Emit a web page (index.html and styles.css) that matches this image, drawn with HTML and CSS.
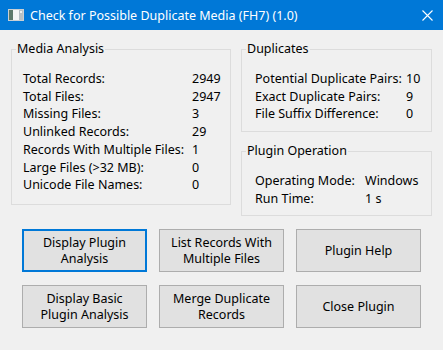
FILE: index.html
```html
<!DOCTYPE html>
<html lang="en">
  <head>
    <meta charset="UTF-8" />
    <title>Check for Possible Duplicate Media (FH7) (1.0)</title>
    <link rel="stylesheet" href="styles.css">
  </head>
  <body>
    <div class="window">
      <div class="titlebar">
        <svg class="app-icon" width="16" height="12" viewBox="0 0 16 12">
          <rect x="0" y="0" width="16" height="12" fill="#c9cfd3" />
          <rect x="1" y="1" width="4" height="10" fill="#5d7a6a" />
          <rect x="5" y="1" width="6" height="10" fill="#f4f6f4" />
          <rect x="11" y="1" width="4" height="10" fill="#b7c0c4" />
          <rect x="12" y="2" width="2" height="2" fill="#eef0f0" />
        </svg>
        <span class="title">Check for Possible Duplicate Media (FH7) (1.0)</span>
        <svg class="close" width="11" height="11" viewBox="0 0 11 11">
          <path d="M0.5 0.5 L10.5 10.5 M10.5 0.5 L0.5 10.5" stroke="#fff" stroke-width="1.1" fill="none" />
        </svg>
      </div>

      <div class="content">
        <div class="panels">
          <fieldset class="group media">
            <legend>Media Analysis</legend>
            <div class="rows">
              <span>Total Records:</span><span>2949</span>
              <span>Total Files:</span><span>2947</span>
              <span>Missing Files:</span><span>3</span>
              <span>Unlinked Records:</span><span>29</span>
              <span>Records With Multiple Files:</span><span>1</span>
              <span>Large Files (&gt;32 MB):</span><span>0</span>
              <span>Unicode File Names:</span><span>0</span>
            </div>
          </fieldset>

          <div class="side">
            <fieldset class="group dups">
              <legend>Duplicates</legend>
              <div class="rows">
                <span>Potential Duplicate Pairs:</span><span>10</span>
                <span>Exact Duplicate Pairs:</span><span>9</span>
                <span>File Suffix Difference:</span><span>0</span>
              </div>
            </fieldset>

            <fieldset class="group operation">
              <legend>Plugin Operation</legend>
              <div class="rows">
                <span>Operating Mode:</span><span>Windows</span>
                <span>Run Time:</span><span>1 s</span>
              </div>
            </fieldset>
          </div>
        </div>

        <div class="buttons">
          <button class="btn focused">Display Plugin<br />Analysis</button>
          <button class="btn">List Records With<br />Multiple Files</button>
          <button class="btn">Plugin Help</button>
          <button class="btn">Display Basic<br />Plugin Analysis</button>
          <button class="btn">Merge Duplicate<br />Records</button>
          <button class="btn">Close Plugin</button>
        </div>
      </div>
    </div>
  </body>
</html>
```

FILE: styles.css
```css
body {
  margin: 0;
  background-color: #f0f0f0;
  font-family: "Noto Sans", "Open Sans", sans-serif;
  font-size: 12.5px;
  color: #000;
}

.window {
  width: 443px;
  height: 350px;
  overflow: hidden;
}

.titlebar {
  height: 30px;
  background-color: #0078d7;
  color: #fff;
  display: flex;
  align-items: center;
  padding: 0 10px 0 8px;
  box-sizing: border-box;
}

.app-icon {
  margin-right: 6px;
  margin-top: -1px;
}

.title {
  flex: 1;
  font-size: 12.5px;
}

.content {
  padding: 11px 11px 0 11px;
}

.panels {
  display: flex;
  gap: 10px;
}

.group {
  margin: 0;
  border: 1px solid #dcdcdc;
  padding: 13px 0 0 11px;
  box-sizing: border-box;
}

.group legend {
  padding: 0 1px;
  margin-left: -7px;
  line-height: 16px;
}

.media {
  width: 221px;
  height: 164px;
}

.side {
  display: flex;
  flex-direction: column;
  gap: 11px;
}

.side .group {
  padding-left: 13px;
}

.side .group legend {
  margin-left: -9px;
}

.dups {
  width: 191px;
  height: 91px;
}

.operation {
  width: 191px;
  height: 73px;
}

.rows {
  display: grid;
  line-height: 17.7px;
}

.media .rows {
  grid-template-columns: 169px auto;
}

.dups .rows {
  grid-template-columns: 151px auto;
}

.operation .rows {
  grid-template-columns: 110px auto;
}

.buttons {
  display: grid;
  grid-template-columns: repeat(3, 125px);
  grid-auto-rows: 43px;
  column-gap: 12px;
  row-gap: 13px;
  margin: 13px 0 0 11px;
}

.btn {
  font-family: "Noto Sans", "Open Sans", sans-serif;
  font-size: 12.5px;
  line-height: 16px;
  color: #000;
  background-color: #e1e1e1;
  border: 1px solid #adadad;
  padding: 0;
  margin: 0;
}

.btn.focused {
  border: 2px solid #0078d7;
}
```
